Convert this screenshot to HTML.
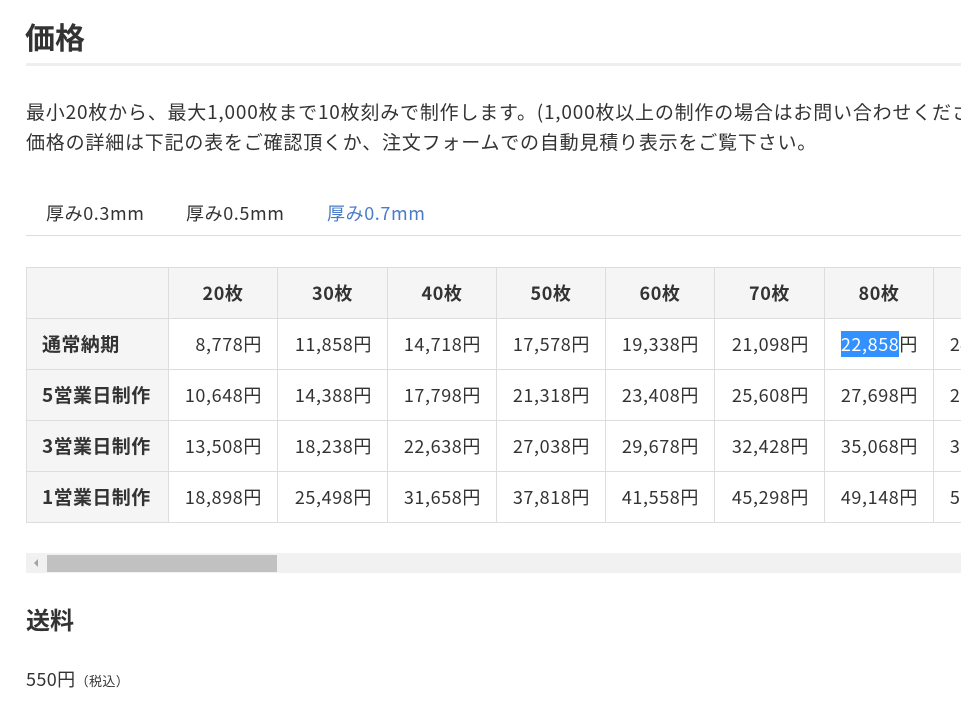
<!DOCTYPE html>
<html><head><meta charset="utf-8"><style>
body{margin:0;width:961px;height:713px;overflow:hidden;background:#fff;color:#333;font-family:"Noto Sans CJK JP","Liberation Sans",sans-serif;position:relative}
.a{position:absolute;white-space:nowrap;line-height:24px}
h1{position:absolute;left:25px;top:16px;margin:0;font-size:30px;line-height:40px;font-weight:bold;color:#333}
.hr{position:absolute;left:26px;right:0;top:63px;height:3px;background:#eee}
p{margin:0}
.wrap{position:absolute;left:26px;top:267px;width:935px;overflow:hidden}
table{border-collapse:collapse;table-layout:fixed;width:1150px;font-size:18px;line-height:24px;letter-spacing:0.6px}
td,th{border:1px solid #ddd;height:50px;padding:0 15px 0 0;text-align:right}
th{background:#f5f5f5;text-align:center;padding:0;font-weight:bold}
td.l{background:#f5f5f5;text-align:left;padding-left:15px;font-weight:bold;letter-spacing:0.4px;font-size:19px}
.sel{background:#3390ff;color:#fff}
</style></head><body>
<h1>価格</h1>
<div class="hr"></div>
<div class="a" style="left:26px;top:97px;font-size:19px;line-height:30px;letter-spacing:0.8px">
<p>最小20枚から、最大1,000枚まで10枚刻みで制作します。(1,000枚以上の制作の場合はお問い合わせください)</p>
<p>価格の詳細は下記の表をご確認頂くか、注文フォームでの自動見積り表示をご覧下さい。</p>
</div>
<div class="a" style="left:46px;top:201px;font-size:18px;letter-spacing:0.6px">厚み0.3mm</div>
<div class="a" style="left:186px;top:201px;font-size:18px;letter-spacing:0.6px">厚み0.5mm</div>
<div class="a" style="left:327px;top:201px;font-size:18px;letter-spacing:0.6px;color:#4a7cc9">厚み0.7mm</div>
<div class="a" style="left:26px;right:0;top:235px;height:1px;background:#ddd"></div>
<div class="wrap"><table>
<colgroup><col style="width:142px"><col style="width:109px"><col style="width:110px"><col style="width:109px"><col style="width:109px"><col style="width:109px"><col style="width:110px"><col style="width:109px"><col style="width:109px"><col style="width:134px"></colgroup>
<tr><th></th><th>20枚</th><th>30枚</th><th>40枚</th><th>50枚</th><th>60枚</th><th>70枚</th><th>80枚</th><th>90枚</th><th>100枚</th></tr>
<tr><td class="l">通常納期</td><td>8,778円</td><td>11,858円</td><td>14,718円</td><td>17,578円</td><td>19,338円</td><td>21,098円</td><td><span class="sel">22,858</span>円</td><td>24,618円</td><td>26,378円</td></tr>
<tr><td class="l">5営業日制作</td><td>10,648円</td><td>14,388円</td><td>17,798円</td><td>21,318円</td><td>23,408円</td><td>25,608円</td><td>27,698円</td><td>29,898円</td><td>31,988円</td></tr>
<tr><td class="l">3営業日制作</td><td>13,508円</td><td>18,238円</td><td>22,638円</td><td>27,038円</td><td>29,678円</td><td>32,428円</td><td>35,068円</td><td>37,818円</td><td>40,458円</td></tr>
<tr><td class="l">1営業日制作</td><td>18,898円</td><td>25,498円</td><td>31,658円</td><td>37,818円</td><td>41,558円</td><td>45,298円</td><td>49,148円</td><td>52,888円</td><td>56,628円</td></tr>
</table></div>
<div class="a" style="left:26px;right:0;top:553px;height:20px;background:#f1f1f1"></div>
<div class="a" style="left:34px;top:559px;width:0;height:0;border-top:4px solid transparent;border-bottom:4px solid transparent;border-right:4px solid #a3a3a3"></div>
<div class="a" style="left:47px;top:555px;width:230px;height:17px;background:#c1c1c1"></div>
<div class="a" style="left:26px;top:604px;font-size:24px;font-weight:bold;line-height:30px">送料</div>
<div class="a" style="left:26px;top:667px;font-size:18px;letter-spacing:0.4px">550円<span style="font-size:13px">（税込）</span></div>
</body></html>
